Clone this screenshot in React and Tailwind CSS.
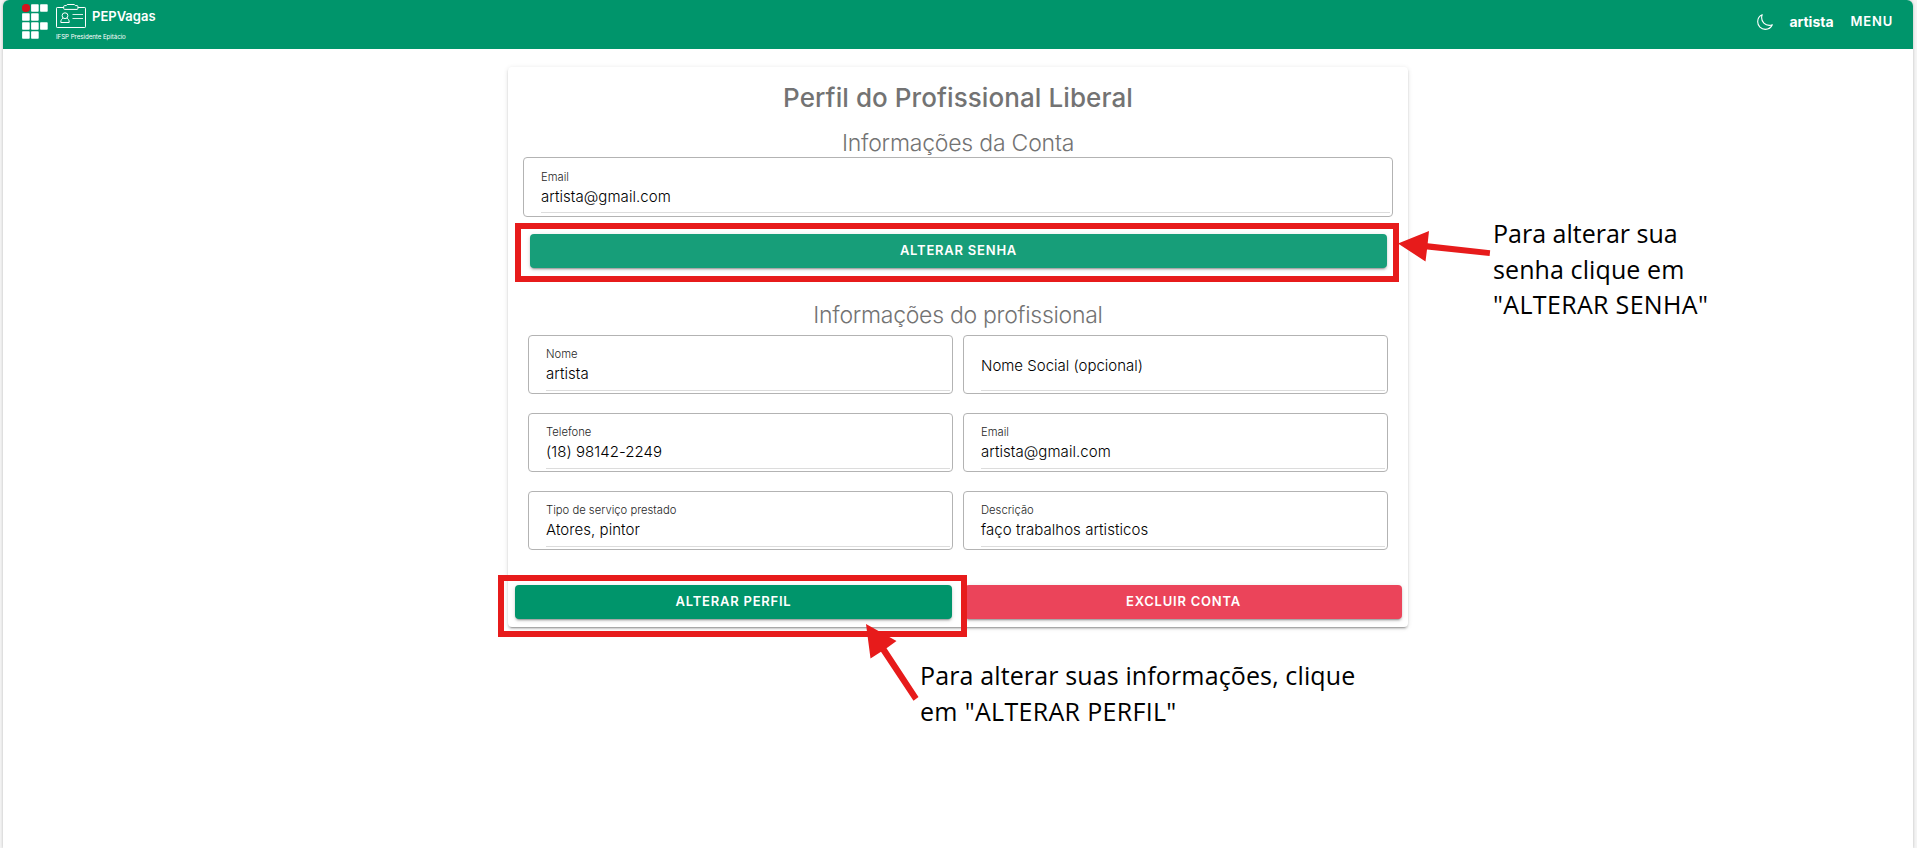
function Field({ label, value, tall }) {
  return (
    <div className={`flex flex-col rounded-[4px] border border-[#b3b3b3] pl-[17px] pr-[2px] ${tall ? "h-[60px] pt-[12px]" : "h-[59px] pt-[11px]"}`}>
      <div className="flex flex-1 flex-col border-b border-[#dcdcdc]">
        {value ? (
          <>
            <span className="h-[15px] text-[11.25px] leading-[15px] text-[#1f1f1f]">{label}</span>
            <span className="mt-[2px] h-[20px] text-[15px] leading-[20px] tracking-[0.05px] text-black">{value}</span>
          </>
        ) : (
          <span className="mt-[9px] h-[20px] text-[15px] leading-[20px] text-black">{label}</span>
        )}
      </div>
      <div className={`shrink-0 ${tall ? "h-[3px]" : "h-[2px]"}`} />
    </div>
  );
}

function Button({ children, className }) {
  return (
    <button className={`flex h-[34px] items-center justify-center rounded-[4px] pb-[2px] text-[13px] font-semibold leading-[32px] tracking-[0.78px] text-white shadow-[0_3px_1px_-2px_rgba(0,0,0,0.2),0_2px_2px_0_rgba(0,0,0,0.14),0_1px_5px_0_rgba(0,0,0,0.12)] ${className}`}>
      {children}
    </button>
  );
}

function SubHeading({ children, className }) {
  return (
    <h2 className={`h-[28px] text-center text-[23px] font-light leading-[28px] text-[#737373] ${className}`}>
      {children}
    </h2>
  );
}

const squares = [
  [1, 0], [2, 0],
  [0, 1], [1, 1],
  [0, 2], [1, 2], [2, 2],
  [0, 3], [1, 3],
];

function InstituteLogo() {
  return (
    <svg width="26" height="35" viewBox="0 0 26 35" fill="#fff">
      <circle cx="4" cy="4" r="4.1" fill="#d3141c" />
      {squares.map(([c, r]) => (
        <rect key={`${c}-${r}`} x={c * 9 + 0.1} y={r * 9 + 0.2} width="7.6" height="7.6" rx="0.7" />
      ))}
    </svg>
  );
}

function BadgeIcon() {
  return (
    <svg width="30" height="25" viewBox="0 0 30 25" fill="none" stroke="#fff" strokeWidth="1">
      <path d="M8 3.5H1.2a.7.7 0 0 0-.7.7v18.6a.7.7 0 0 0 .7.7h27.6a.7.7 0 0 0 .7-.7V4.2a.7.7 0 0 0-.7-.7H22" />
      <path d="M7.700 2.500a.9.9 0 0 1 .9-.9h1.700l.9-1.100h7.200l.9 1.100h1.700a.9.9 0 0 1 .9.9v2a.9.9 0 0 1-.9.9H8.600a.9.9 0 0 1-.9-.9z" />
      <circle cx="9" cy="11.7" r="2.9" />
      <path d="M7.3 14.2c-1.7.5-2.5 1.7-2.5 4.3h8.4c0-2.6-.8-3.8-2.5-4.300" />
      <path d="M16.500 10.500h10.500M16.500 14.500h10.500" strokeOpacity="0.85" />
    </svg>
  );
}

function MoonIcon() {
  return (
    <svg width="18" height="18" viewBox="0 0 512 512" fill="none" stroke="#fff" strokeWidth="32" strokeLinecap="round" strokeLinejoin="round">
      <path d="M160 136c0-30.620 4.510-61.610 16-88C99.570 81.270 48 159.320 48 248c0 119.290 96.710 216 216 216 88.680 0 166.730-51.570 200-128-26.390 11.490-57.380 16-88 16-119.290 0-216-96.710-216-216z" />
    </svg>
  );
}

export default function App() {
  return (
    <div className="relative h-[848px] w-[1917px] overflow-hidden bg-[#f4f4f4] pl-[3px] pr-[4px] font-['Inter',sans-serif]">
      <div className="flex h-full flex-col overflow-hidden rounded-t-[6px] bg-white shadow-[0_0_3px_rgba(0,0,0,0.25)]">
        <header className="flex h-[49px] shrink-0 items-start justify-between bg-[#00956b] text-white">
          <div className="flex items-start pl-[19px] pt-[4px]">
            <InstituteLogo />
            <div className="ml-[8px] flex flex-col">
              <div className="flex items-start">
                <BadgeIcon />
                <span className="ml-[6px] mt-[4px] text-[13px] font-semibold leading-[17px]">PEPVagas</span>
              </div>
              <span className="mt-[4px] text-[6.2px] leading-[8px] tracking-[-0.06px]">IFSP Presidente Epitácio</span>
            </div>
          </div>
          <div className="flex items-start pr-[20px] pt-[13px]">
            <MoonIcon />
            <span className="ml-[15px] text-[14px] font-bold leading-[18px]">artista</span>
            <span className="ml-[17px] text-[13px] font-semibold leading-[17px] tracking-[0.78px]">MENU</span>
          </div>
        </header>

        <main className="flex flex-1 flex-col pl-[505px] pt-[18px]">
          <section className="h-[560px] w-[900px] rounded-[4px] bg-white pt-[14px] shadow-[0_3px_1px_-2px_rgba(0,0,0,0.2),0_2px_2px_0_rgba(0,0,0,0.14),0_1px_5px_0_rgba(0,0,0,0.12)]">
            <h1 className="h-[33px] text-center text-[26px] font-medium leading-[33px] tracking-[0.08px] text-[#737373]">
              Perfil do Profissional Liberal
            </h1>
            <SubHeading className="mt-[15px] tracking-[-0.21px]">Informações da Conta</SubHeading>
            <div className="ml-[15px] w-[870px] font-light">
              <Field label="Email" value="artista@gmail.com" tall />
            </div>
            <Button className="ml-[22px] mt-[17px] w-[857px] bg-[#179e79]">ALTERAR SENHA</Button>
            <SubHeading className="mt-[33px] tracking-[-0.28px]">Informações do profissional</SubHeading>
            <div className="ml-[20px] mt-[6px] grid w-[860px] grid-cols-2 gap-x-[10px] gap-y-[19px] font-light">
              <Field label="Nome" value="artista" />
              <Field label="Nome Social (opcional)" />
              <Field label="Telefone" value="(18) 98142-2249" />
              <Field label="Email" value="artista@gmail.com" />
              <Field label="Tipo de serviço prestado" value="Atores, pintor" />
              <Field label="Descrição" value="faço trabalhos artisticos" />
            </div>
            <div className="ml-[7px] mt-[35px] grid w-[887px] grid-cols-2 gap-x-[13px]">
              <Button className="bg-[#00956b]">ALTERAR PERFIL</Button>
              <Button className="bg-[#eb445a]">EXCLUIR CONTA</Button>
            </div>
          </section>
        </main>
      </div>

      <div className="absolute left-[515px] top-[223px] h-[59px] w-[884px] border-[6px] border-[#e71b1b]" />
      <div className="absolute left-[498px] top-[575px] h-[62px] w-[469px] border-[6px] border-[#e71b1b]" />
      <svg className="absolute left-0 top-0" width="1917" height="848" viewBox="0 0 1917 848" fill="#e71b1b">
        <path d="M1398 243.500L1429 231L1427.700 243.300L1490.200 250.200L1489.600 256L1427 249.600L1425.500 261.500Z" />
        <path d="M866 624L896.500 641L886.500 648.200L918.500 697L913.500 700.800L881 651.700L870.500 658.500Z" />
      </svg>
      <div className="absolute left-[1493px] top-[216px] flex flex-col whitespace-nowrap font-['Open_Sans',sans-serif] text-[25px] leading-[35.7px] text-black">
        <span>Para alterar sua</span>
        <span className="tracking-[0.1px]">senha clique em</span>
        <span className="tracking-[0.33px]">"ALTERAR SENHA"</span>
      </div>
      <div className="absolute left-[920px] top-[658px] flex flex-col whitespace-nowrap font-['Open_Sans',sans-serif] text-[25px] leading-[35.7px] text-black">
        <span className="tracking-[0.13px]">Para alterar suas informações, clique</span>
        <span className="tracking-[0.32px]">em "ALTERAR PERFIL"</span>
      </div>
    </div>
  );
}
